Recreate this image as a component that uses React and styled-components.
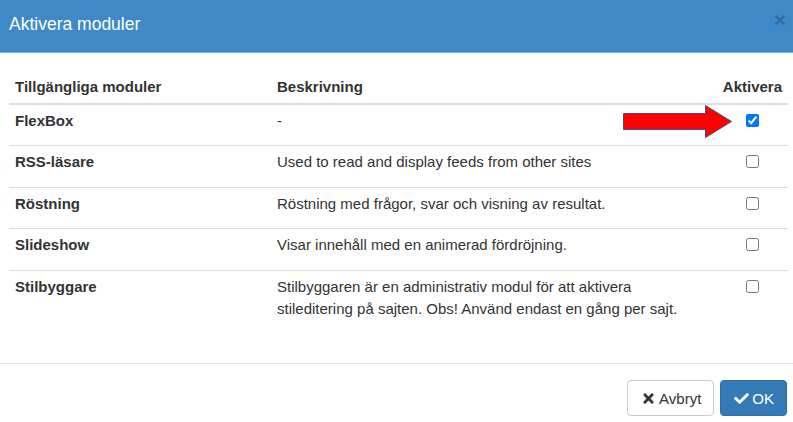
import React from "react";
import styled, { createGlobalStyle } from "styled-components";
import { FaTimes, FaCheck } from "react-icons/fa";

const GlobalStyle = createGlobalStyle`
  html, body {
    margin: 0;
    padding: 0;
    background: #fff;
    overflow: hidden;
  }
  body {
    font-family: "Liberation Sans", Arial, sans-serif;
    color: #333;
  }
`;

const Modal = styled("div")`
  width: 793px;
  height: 422px;
  display: flex;
  flex-direction: column;
  background: #fff;
`;

const Header = styled("div")`
  height: 52px;
  display: flex;
  align-items: center;
  justify-content: space-between;
  padding: 0 7px 0 9px;
  background: #3f89c9;
  border-bottom: 1px solid #7fb0dc;
`;

const Title = styled("h4")`
  margin: 0;
  font-size: 17.5px;
  font-weight: normal;
  color: #fff;
  padding-bottom: 4px;
`;

const Close = styled("button")`
  border: none;
  background: none;
  padding: 0;
  margin-top: -14px;
  font-family: "Liberation Sans", Arial, sans-serif;
  font-size: 21px;
  font-weight: bold;
  line-height: 1;
  color: #000;
  opacity: 0.2;
  cursor: pointer;
`;

const Body = styled("div")`
  flex: 1;
  padding: 15px 5px 0 9px;
`;

const Table = styled("table")`
  width: 100%;
  border-collapse: collapse;
  font-size: 15px;
  line-height: 22.5px;
`;

const Th = styled("th")`
  text-align: ${(p) => p.$align || "left"};
  vertical-align: bottom;
  padding: 8px 6px 4px;
  border-bottom: 2px solid #ddd;
  font-weight: bold;
  width: ${(p) => p.$width || "auto"};
`;

const Row = styled("tr")`
  border-bottom: 1px solid #ddd;
  &:last-child {
    border-bottom: none;
  }
`;

const Td = styled("td")`
  vertical-align: top;
  padding: 5px 6px 13px;
  font-weight: ${(p) => (p.$bold ? "bold" : "normal")};
  text-align: ${(p) => p.$align || "left"};
  position: relative;
`;

const Check = styled("input")`
  width: 13px;
  height: 13px;
  margin: 4px 0 0 0;
  vertical-align: top;
`;

const Arrow = styled("svg")`
  position: absolute;
  left: -94px;
  top: 0;
`;

const Footer = styled("div")`
  border-top: 1px solid #e5e5e5;
  padding: 16px 6px 6px;
  display: flex;
  justify-content: flex-end;
  gap: 6px;
`;

const Button = styled("button")`
  height: 36px;
  display: flex;
  align-items: center;
  gap: 3px;
  padding: 0 12px 0 13px;
  font-family: "Liberation Sans", Arial, sans-serif;
  font-size: 15px;
  border-radius: 4px;
  border: 1px solid ${(p) => (p.$primary ? "#2e6da4" : "#ccc")};
  background: ${(p) => (p.$primary ? "#337ab7" : "#fff")};
  color: ${(p) => (p.$primary ? "#fff" : "#333")};
  cursor: pointer;
`;

const modules = [
  { name: "FlexBox", desc: "-", checked: true },
  { name: "RSS-läsare", desc: "Used to read and display feeds from other sites" },
  { name: "Röstning", desc: "Röstning med frågor, svar och visning av resultat." },
  { name: "Slideshow", desc: "Visar innehåll med en animerad fördröjning." },
  {
    name: "Stilbyggare",
    desc: "Stilbyggaren är en administrativ modul för att aktivera stileditering på sajten. Obs! Använd endast en gång per sajt.",
  },
];

const App = () => {
  return (
    <Modal>
      <GlobalStyle />
      <Header>
        <Title>Aktivera moduler</Title>
        <Close>×</Close>
      </Header>
      <Body>
        <Table>
          <thead>
            <tr>
              <Th $width="250px">Tillgängliga moduler</Th>
              <Th>Beskrivning</Th>
              <Th $align="right" $width="59px">Aktivera</Th>
            </tr>
          </thead>
          <tbody>
            {modules.map((m) => (
              <Row key={m.name}>
                <Td $bold>{m.name}</Td>
                <Td>{m.desc}</Td>
                <Td $align="center">
                  {m.checked && (
                    <Arrow width="110" height="34" viewBox="0 0 110 34">
                      <polygon
                        points="0.5,8.5 82.5,8.5 82.5,0.5 108.5,16.5 82.5,32.5 82.5,24.5 0.5,24.5"
                        fill="#ff0000"
                        stroke="#3b4f8a"
                        strokeWidth="1"
                      />
                    </Arrow>
                  )}
                  <Check type="checkbox" defaultChecked={!!m.checked} />
                </Td>
              </Row>
            ))}
          </tbody>
        </Table>
      </Body>
      <Footer>
        <Button>
          <FaTimes size={15} />
          Avbryt
        </Button>
        <Button $primary>
          <FaCheck size={15} />
          OK
        </Button>
      </Footer>
    </Modal>
  );
};

export default App;
